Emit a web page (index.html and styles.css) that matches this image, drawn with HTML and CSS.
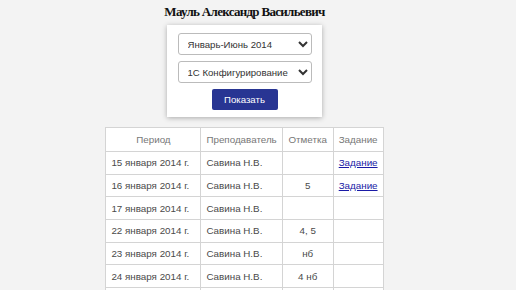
FILE: index.html
```html
<!DOCTYPE html>
<html lang="ru">
  <head>
    <meta charset="UTF-8" />
    <title>Успеваемость</title>
    <link rel="stylesheet" href="styles.css">
  </head>
  <body>
    <div class="page">
      <h1 class="student">Мауль Александр Васильевич</h1>

      <form class="filter-card">
        <select id="period-select">
          <option>Январь-Июнь 2014</option>
        </select>
        <select id="subject-select">
          <option>1С Конфигурирование</option>
        </select>
        <button type="button" class="show-btn">Показать</button>
      </form>

      <table class="marks">
        <tr>
          <th class="col-period">Период</th>
          <th class="col-teacher">Преподаватель</th>
          <th class="col-mark">Отметка</th>
          <th class="col-task">Задание</th>
        </tr>
        <tr>
          <td>15 января 2014 г.</td>
          <td>Савина Н.В.</td>
          <td class="mark"></td>
          <td><a href="#">Задание</a></td>
        </tr>
        <tr>
          <td>16 января 2014 г.</td>
          <td>Савина Н.В.</td>
          <td class="mark">5</td>
          <td><a href="#">Задание</a></td>
        </tr>
        <tr>
          <td>17 января 2014 г.</td>
          <td>Савина Н.В.</td>
          <td class="mark"></td>
          <td></td>
        </tr>
        <tr>
          <td>22 января 2014 г.</td>
          <td>Савина Н.В.</td>
          <td class="mark">4, 5</td>
          <td></td>
        </tr>
        <tr>
          <td>23 января 2014 г.</td>
          <td>Савина Н.В.</td>
          <td class="mark">нб</td>
          <td></td>
        </tr>
        <tr>
          <td>24 января 2014 г.</td>
          <td>Савина Н.В.</td>
          <td class="mark">4 нб</td>
          <td></td>
        </tr>
        <!-- next rows are below the fold -->
        <tr>
          <td></td>
          <td></td>
          <td class="mark"></td>
          <td></td>
        </tr>
      </table>
    </div>
  </body>
</html>
```

FILE: styles.css
```css
* {
  box-sizing: border-box;
}

body {
  margin: 0;
  background: #f3f3f3;
  font-family: "Liberation Sans", Arial, sans-serif;
}

.page {
  width: 489px;
  padding-top: 4px;
  display: flex;
  flex-direction: column;
  align-items: center;
}

.student {
  margin: 0;
  font-family: "Liberation Serif", "Times New Roman", serif;
  font-size: 13px;
  line-height: 16px;
  letter-spacing: -0.7px;
  font-weight: bold;
  color: #111;
}

.filter-card {
  width: 155px;
  margin-top: 5px;
  padding: 8px 10px 7px;
  background: white;
  box-shadow: 0 1px 5px rgba(0, 0, 0, 0.3);
  display: flex;
  flex-direction: column;
  align-items: center;
  gap: 6px;
}

.filter-card select {
  width: 134px;
  height: 22px;
  padding: 0 5px;
  border: 1px solid #bbb;
  border-radius: 3px;
  background: white;
  font-family: "Liberation Sans", Arial, sans-serif;
  font-size: 9.6px;
  color: #333;
}

.show-btn {
  width: 66px;
  height: 21px;
  border: none;
  border-radius: 2px;
  background: #283593;
  color: white;
  font-family: "Liberation Sans", Arial, sans-serif;
  font-size: 9.6px;
  cursor: pointer;
}

.marks {
  margin-top: 10px;
  border-collapse: collapse;
  background: white;
  font-size: 9.8px;
  color: #4a4a4a;
}

.marks th,
.marks td {
  border: 1px solid #d4d4d4;
  height: 22.7px;
  padding: 0 5px;
  text-align: left;
  white-space: nowrap;
}

.marks th {
  height: 24px;
  font-weight: normal;
  color: #777;
  text-align: center;
}

.col-period {
  width: 95px;
}

.col-teacher {
  width: 80px;
}

.col-mark {
  width: 51px;
}

.col-task {
  width: 48px;
}

.marks td.mark {
  text-align: center;
}

.marks a {
  color: #1a1aa6;
}
```
